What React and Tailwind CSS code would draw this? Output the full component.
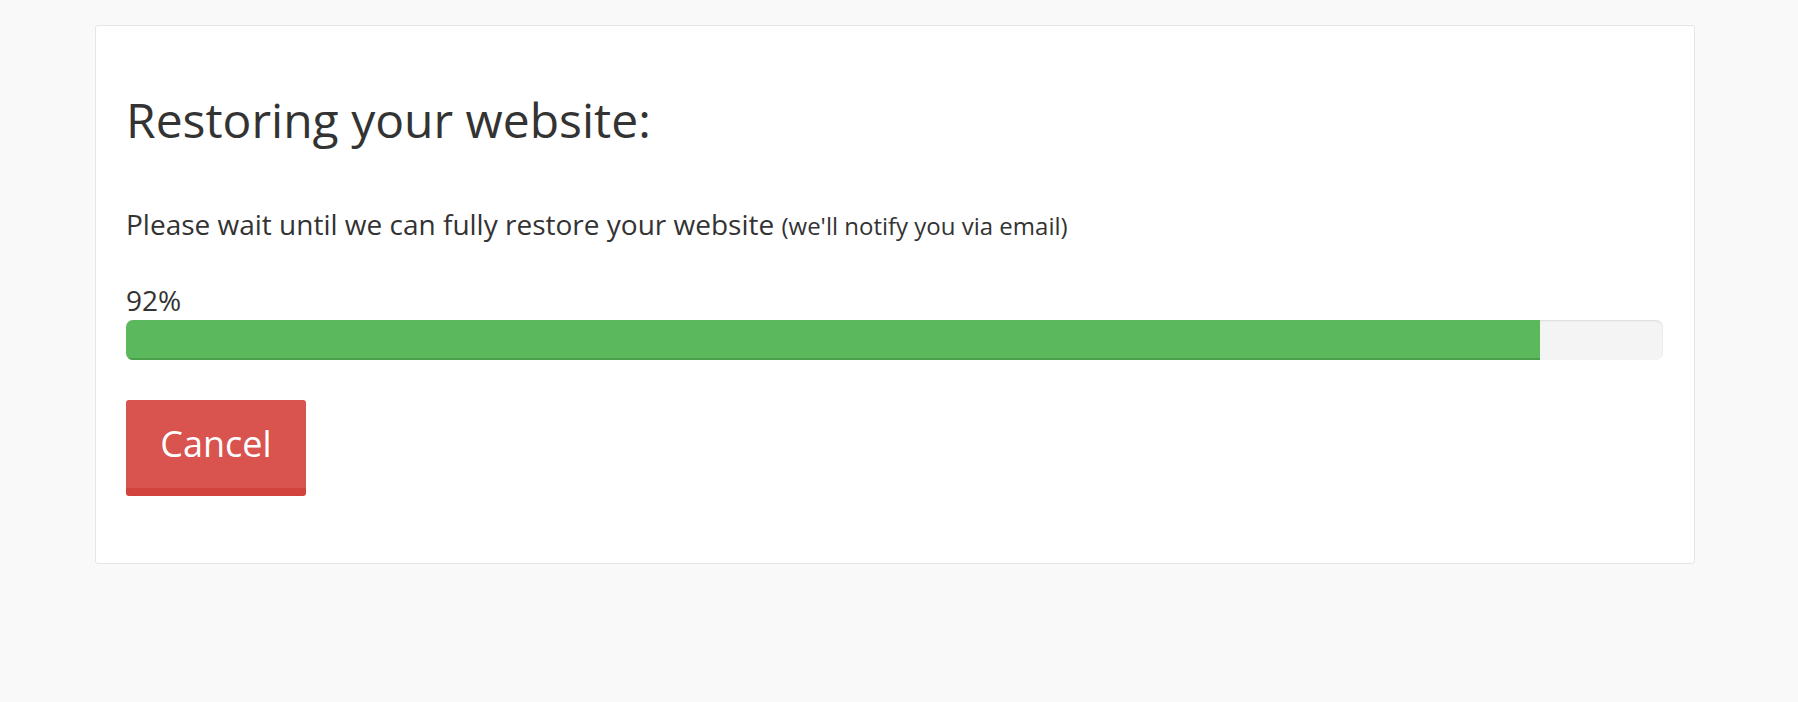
import React from 'react'

export default function App() {
  const percent = 92
  return (
    <div className="min-h-screen bg-[#f9f9f9] pt-[25px] pl-[95px] font-['Open_Sans',sans-serif] text-[#333]">
      <div className="w-[1600px] border border-[#e6e6e6] rounded-[3px] bg-white pl-[30px] pr-[31px] pt-[68px] pb-[67px]">
        <h1 className="text-[48px] leading-[52.8px] font-normal">Restoring your website:</h1>
        <p className="mt-[61px] h-[33.6px] text-[28px] leading-[33.6px] whitespace-nowrap">
          Please wait until we can fully restore your website{' '}
          <span className="text-[24px] leading-none">(we'll notify you via email)</span>
        </p>
        <div className="mt-[40px] text-[28px] leading-[38.4px]">{percent}%</div>
        <div className="h-[40px] rounded-[7px] bg-[#f4f4f4] shadow-[inset_0_1px_2px_rgba(0,0,0,0.1)] overflow-hidden">
          <div
            className="h-full bg-[#5cb85c] border-b-2 border-[#4a9f4a]"
            style={{ width: `${percent}%` }}
          />
        </div>
        <button className="mt-[40px] w-[180px] h-[96px] rounded-[3px] bg-[#d9534f] border-b-[8px] border-[#d2433e] text-white text-[36px] flex items-center justify-center">
          Cancel
        </button>
      </div>
    </div>
  )
}
